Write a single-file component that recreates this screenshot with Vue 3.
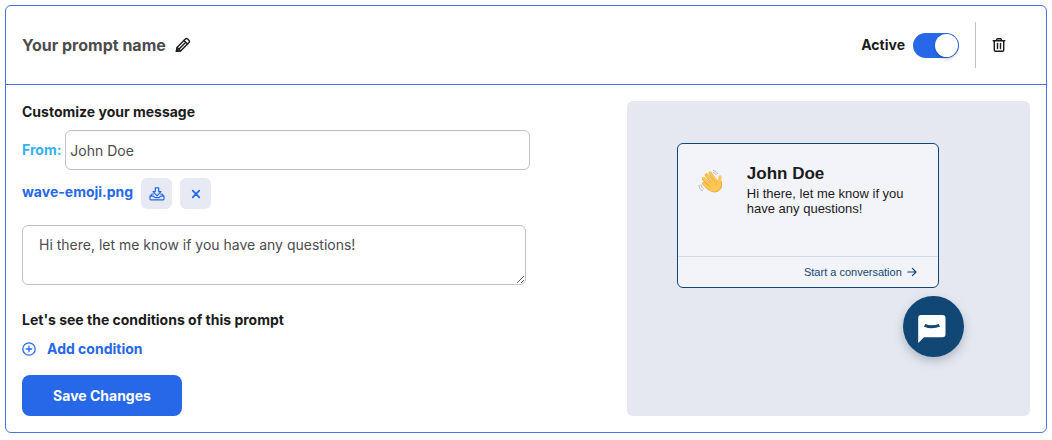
<script setup>
import { ref } from 'vue'

const active = ref(true)
const sender = ref('John Doe')
const message = ref('Hi there, let me know if you have any questions!')
const fileName = ref('wave-emoji.png')
</script>

<template>
  <section class="card">
    <header class="head">
      <h2 class="name">Your prompt name</h2>
      <button class="icon-btn edit" type="button" aria-label="Edit prompt name">
        <svg width="16" height="16" viewBox="0 0 16 16" fill="none" stroke="currentColor" stroke-width="1.4" stroke-linejoin="round" stroke-linecap="round">
          <path d="M1.4 14.4l.6-4 8.4-8.4a1.6 1.6 0 0 1 2.2 0l1.4 1.4a1.6 1.6 0 0 1 0 2.2L5.6 14z" />
          <path d="M9 3.5L12.5 7M2.2 10.6l3.2 3.2M4.6 11.4l5.9-5.9" />
          <path d="M1.4 14.4l.3-2.1 1.8 1.8z" fill="currentColor" />
        </svg>
      </button>
      <label class="toggle">
        <span>Active</span>
        <input v-model="active" type="checkbox" role="switch" />
      </label>
      <div class="remove">
        <button class="icon-btn" type="button" aria-label="Delete prompt">
          <svg width="14" height="16" viewBox="0 0 14 16" fill="none" stroke="currentColor" stroke-width="1.4" stroke-linecap="round" stroke-linejoin="round">
            <path d="M1.2 3.7h11.6M4.3 3.5l.8-1.7h3.8l.8 1.7M2.3 3.9v9.2q0 1.2 1.2 1.2h7q1.2 0 1.2-1.2V3.9" />
            <path d="M5.5 6.5v5M8.5 6.5v5" />
          </svg>
        </button>
      </div>
    </header>

    <div class="body">
      <form class="form" @submit.prevent>
        <h3 class="title">Customize your message</h3>
        <div class="from">
          <label for="sender">From:</label>
          <input id="sender" v-model="sender" type="text" />
        </div>
        <div class="file">
          <a href="#">{{ fileName }}</a>
          <button class="chip" type="button" aria-label="Upload image">
            <svg width="16" height="16" viewBox="0 0 16 16" fill="none" stroke="currentColor" stroke-width="1.2" stroke-linejoin="round" stroke-linecap="round">
              <path d="M6.3 1.8h3.4v3.8h2.3L8 9.8 4 5.600h2.300z" />
              <path d="M4.400 8H3.200L1 10.200v2.900q0 .7.7.7h12.600q.7 0 .7-.7v-2.900L12.800 8h-1.200M1.200 10.200h3.300L6 11.600h4l1.500-1.400h3.300" />
            </svg>
          </button>
          <button class="chip" type="button" aria-label="Remove image">
            <svg width="10" height="10" viewBox="0 0 10 10" fill="none" stroke="currentColor" stroke-width="1.7" stroke-linecap="round">
              <path d="M1.700 1.700l6.600 6.600M8.300 1.700L1.700 8.300" />
            </svg>
          </button>
        </div>
        <textarea v-model="message" aria-label="Message"></textarea>
        <h3 class="title">Let's see the conditions of this prompt</h3>
        <button class="add" type="button">
          <svg width="14" height="14" viewBox="0 0 14 14" fill="none" stroke="currentColor" stroke-width="1.3" stroke-linecap="round">
            <circle cx="7" cy="7" r="6.2" />
            <path d="M7 4.2v5.6M4.2 7h5.6" />
          </svg>
          <span>Add condition</span>
        </button>
        <button class="save" type="submit">Save Changes</button>
      </form>

      <aside class="preview">
        <div class="widget">
          <article class="popup">
            <div class="popup-main">
              <svg class="wave" width="26" height="26" viewBox="0 0 26 26" fill="none" stroke-linecap="round" stroke-linejoin="round">
                <g stroke="#eda83a" stroke-width="3.4">
                  <path d="M8.400 6l6 7.400M12.200 4.200l5 7M5.600 9.800l7 7M5.800 14.600l5 4.800" />
                </g>
                <g stroke="#fcc653" stroke-width="2.500">
                  <path d="M8.500 5.900l6 7.400M12.300 4.200l5 7M5.700 9.700l7 7M5.900 14.500l5 4.800" />
                </g>
                <path d="M9 17.600l7.400-8.600 3.400 2.600.8-4.200c.4-1.900 3-1.600 2.900.4l-.2 4.600c1.500 4.200.2 7.600-2.600 9.400-3.400 2-7 .8-9-1.200z" fill="#fcc653" />
                <path d="M10.400 20.200c2.400 2.700 6.600 3.700 10 1.600 2.800-1.800 4-5.200 2.700-9.300" stroke="#eda83a" stroke-width="1" />
                <path d="M9.400 9.500l4 4.600M13 7.700l3.800 4.800M7.800 13.500l4 4M19.800 11.800c-1.700 1.300-2.200 2.800-1.700 4.600" stroke="#eda83a" stroke-width=".7" />
                <path d="M1 16.400c.1 2.600 1.300 4.300 3.500 5.200M3 16c.1 1.800 1 3 2.400 3.700M15.400 1.400c2.100.4 3.500 1.500 4.300 3.600M15.600 3.500c1.200.4 1.900 1.100 2.400 2.300" stroke="#b4b5bb" stroke-width="1" />
              </svg>
              <div>
                <h4>{{ sender }}</h4>
                <p>{{ message }}</p>
              </div>
            </div>
            <a class="start" href="#">
              <span>Start a conversation</span>
              <svg width="10" height="10" viewBox="0 0 10 10" fill="none" stroke="currentColor" stroke-width="1.2" stroke-linecap="round" stroke-linejoin="round">
                <path d="M.8 5h8.200M5.400 1.400L9 5 5.400 8.600" />
              </svg>
            </a>
          </article>
          <button class="launcher" type="button" aria-label="Open chat">
            <svg width="28" height="28" viewBox="0 0 28 28">
              <path d="M3 0h21.500q3 0 3 3v16.200q0 3-3 3H6L.8 27.600q-.6.500-.6-.4V3q0-3 2.800-3z" fill="#fff" />
              <path d="M6.600 10.400q7.200 2.800 14.800 0" fill="none" stroke="#104775" stroke-width="3" />
            </svg>
          </button>
        </div>
      </aside>
    </div>
  </section>
</template>

<style>
body {
  background: #fff;
}
</style>

<style scoped>
.card,
.card * {
  box-sizing: border-box;
}

.card {
  margin: 5px;
  border: 1px solid #4b70e2;
  border-radius: 6px;
  font-family: Inter, "Liberation Sans", sans-serif;
  font-size: 14px;
  line-height: 20px;
  color: #1b1b1d;
}

button {
  padding: 0;
  border: 0;
  background: none;
  font: inherit;
  color: inherit;
  cursor: pointer;
}

svg {
  display: block;
}

h2,
h3,
h4,
p {
  margin: 0;
}

a {
  text-decoration: none;
}

.head {
  display: flex;
  align-items: center;
  padding: 16px;
  border-bottom: 1px solid #4b70e2;
}

.name {
  font-size: 16px;
  font-weight: 700;
  color: #4c4c4f;
}

.edit {
  margin-left: 9px;
}

.toggle {
  display: flex;
  align-items: center;
  gap: 8px;
  margin-left: auto;
  font-weight: 700;
}

.toggle input {
  appearance: none;
  display: flex;
  width: 46px;
  height: 25px;
  margin: 0;
  padding: 1px;
  border-radius: 13px;
  background: #b9bccb;
}

.toggle input::before {
  content: "";
  width: 23px;
  height: 23px;
  border-radius: 50%;
  background: #fff;
  box-shadow: 0 2px 3px rgba(0, 0, 0, 0.2);
}

.toggle input:checked {
  justify-content: flex-end;
  background: #2668e8;
}

.remove {
  display: flex;
  align-items: center;
  height: 46px;
  margin-left: 16px;
  padding: 0 24px 0 16px;
  border-left: 1px solid #c0bfcc;
}

.body {
  display: flex;
  padding: 16px;
}

.form {
  display: flex;
  flex-direction: column;
  align-items: flex-start;
  width: 60%;
}

.title {
  margin-top: 1px;
  font-size: 14px;
  font-weight: 700;
}

.from {
  display: flex;
  align-items: center;
  gap: 4px;
  width: 84%;
  margin-top: 8px;
}

.from label {
  font-weight: 700;
  color: #36b0f5;
}

.from input,
textarea {
  border: 1px solid #bfbed6;
  border-radius: 6px;
  background: #fff;
  font: inherit;
  color: #4c4c4f;
}

.from input {
  flex: 1;
  min-width: 0;
  height: 40px;
  padding: 0 4px;
}

.file {
  display: flex;
  align-items: flex-start;
  gap: 8px;
  margin-top: 8px;
  font-weight: 700;
  color: #2668e8;
}

.file a {
  padding-top: 4px;
  color: inherit;
}

.chip {
  display: flex;
  align-items: center;
  justify-content: center;
  width: 31px;
  height: 31px;
  border-radius: 6px;
  background: #e7eaf2;
}

textarea {
  display: block;
  width: 504px;
  max-width: 100%;
  height: 60px;
  margin: 16px 0 24px;
  padding: 9px 16px;
}

.add {
  display: flex;
  align-items: center;
  gap: 11px;
  margin-top: 9px;
  font-weight: 700;
  color: #2668e8;
}

.save {
  width: 160px;
  height: 41px;
  margin-top: 16px;
  border-radius: 8px;
  background: #2668e8;
  font-weight: 700;
  color: #fff;
}

.preview {
  width: 40%;
  padding: 42px 50px;
  border-radius: 6px;
  background: #e5e8f0;
  font-family: "Liberation Sans", Arial, sans-serif;
}

.widget {
  display: flex;
  flex-direction: column;
  align-items: flex-end;
  gap: 8px;
  width: 287px;
}

.popup {
  align-self: flex-start;
  width: 262px;
  border: 1px solid #104775;
  border-radius: 6px;
  background: #f3f4f9;
}

.popup-main {
  display: flex;
  gap: 23px;
  height: 112px;
  padding: 20px;
}

.wave {
  flex: none;
  margin-top: 5px;
}

.popup h4 {
  font-size: 17px;
  font-weight: 700;
  line-height: 20px;
}

.popup p {
  margin-top: 2px;
  font-size: 13px;
  line-height: 15px;
}

.start {
  display: flex;
  align-items: center;
  justify-content: flex-end;
  gap: 5px;
  height: 31px;
  padding: 0 21px;
  border-top: 1px solid #d5daea;
  font-size: 11px;
  color: #104775;
}

.launcher {
  display: flex;
  align-items: center;
  justify-content: center;
  width: 61px;
  height: 61px;
  padding: 4px 3px 0 0;
  border-radius: 50%;
  background: #104775;
  box-shadow: 0 4px 10px rgba(60, 70, 95, 0.3);
}
</style>
